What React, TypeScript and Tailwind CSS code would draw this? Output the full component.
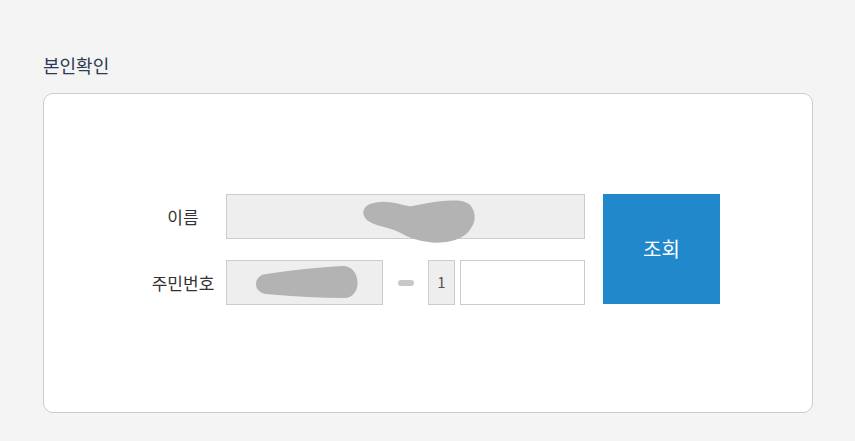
import React from "react";

const Blob1 = () => (
  <svg className="absolute -left-px -top-px overflow-visible" width="359" height="45" viewBox="0 0 359 45">
    <path
      d="M146 11 C158 7 172 11 184 14 C198 11 214 7 232 8 C248 9 250 24 244 33 C238 44 222 48 206 47 C192 46 182 42 172 36 C160 31 148 30 142 25 C136 19 139 13 146 11 Z"
      fill="#b3b3b3"
      stroke="#b3b3b3"
      strokeWidth="3"
      strokeLinejoin="round"
    />
  </svg>
);

const Blob2 = () => (
  <svg className="absolute -left-px -top-px overflow-visible" width="157" height="45" viewBox="0 0 157 45">
    <path
      d="M40 15 C60 12 98 8 116 7 C134 6 136 37 118 37 C96 37 62 35 40 33 C28 32 28 16 40 15 Z"
      fill="#b3b3b3"
      stroke="#b3b3b3"
      strokeWidth="2"
      strokeLinejoin="round"
    />
  </svg>
);

export default function App() {
  return (
    <div className="min-h-screen w-full bg-[#f4f4f4] px-[43px] pt-[52px] font-['Noto_Sans_CJK_KR','Noto_Sans',sans-serif]">
      {/* --- Title --- */}
      <h2 className="text-[18px] leading-[27px] text-[#2b3a55] mb-[14px]">본인확인</h2>

      {/* --- Card --- */}
      <div className="h-[320px] w-[770px] rounded-[10px] border border-[#cccccc] bg-white pt-[100px] pl-[96px]">
        <div className="flex gap-[18px]">
          <div className="flex flex-col gap-[21px]">
            {/* name row */}
            <div className="flex items-center">
              <div className="w-[86px] text-center text-[17px] text-[#333]">이름</div>
              <div className="relative h-[45px] w-[359px] border border-[#cccccc] bg-[#eeeeee]">
                <Blob1 />
              </div>
            </div>

            {/* id number row */}
            <div className="flex items-center">
              <div className="w-[86px] text-center text-[17px] text-[#333]">주민번호</div>
              <div className="relative h-[45px] w-[157px] border border-[#cccccc] bg-[#eeeeee]">
                <Blob2 />
              </div>
              <div className="flex w-[45px] justify-center">
                <span className="block h-[6px] w-[16px] rounded-full bg-[#c8c8c8]" />
              </div>
              <div className="flex h-[45px] w-[27px] items-center justify-center border border-[#cccccc] bg-[#eeeeee] text-[15px] text-[#555]">
                1
              </div>
              <input
                type="text"
                className="ml-[5px] h-[45px] w-[125px] border border-[#cccccc] bg-white outline-none"
              />
            </div>
          </div>

          <button className="h-[110px] w-[117px] bg-[#2288cc] text-[20px] text-white">조회</button>
        </div>
      </div>
    </div>
  );
}
